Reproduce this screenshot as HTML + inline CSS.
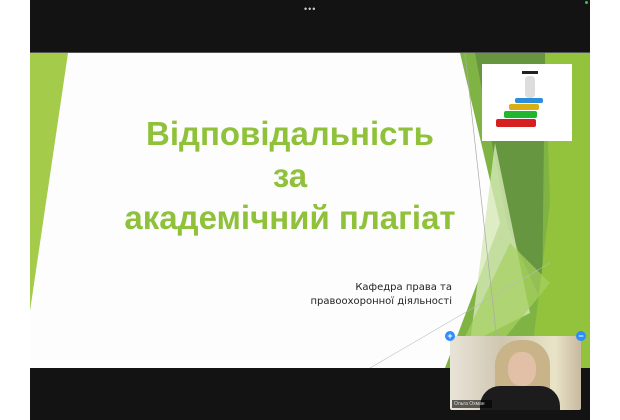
<!DOCTYPE html>
<html><head><meta charset="utf-8"><style>
html,body{margin:0;padding:0;width:620px;height:420px;background:#fff;overflow:hidden;font-family:"Liberation Sans",sans-serif;}
.blk{position:absolute;left:30px;top:0;width:560px;height:420px;background:#131313;}
.slide{position:absolute;left:30px;top:52px;width:560px;height:315px;background:#fdfdfd;overflow:hidden;border-top:1px solid #555;}
.t{position:absolute;left:0;width:520px;text-align:center;color:#8fc23a;font-weight:bold;font-size:33px;font-family:"Liberation Sans",sans-serif;letter-spacing:0px}
.s{position:absolute;right:138px;font-size:10px;color:#222;text-align:right;font-family:"DejaVu Sans",sans-serif}
.dots{position:absolute;left:304px;top:4px;color:#ccc;font-size:9px;letter-spacing:1px}
.vid{position:absolute;left:450px;top:336px;width:131px;height:74px;background:linear-gradient(90deg,#e8e4d8,#cfc6b0 40%,#e9e4c8 80%,#c8b8a0);border-radius:2px;overflow:hidden}
.btn{position:absolute;width:10px;height:10px;border-radius:50%;background:#2d8cff;color:#fff;font-size:9px;line-height:10px;text-align:center;font-weight:bold}
</style></head><body>
<div class="blk"></div>
<div class="dots">•••</div>
<div style="position:absolute;left:585px;top:1px;width:3px;height:3px;border-radius:50%;background:#3c3"></div>
<div class="slide">
<svg width="560" height="315" style="position:absolute;left:0;top:0">
<polygon points="0,0 38,0 0,258" fill="#a4cb4a"/>
<polygon points="430,0 560,0 560,315 415,315 470,170" fill="#7fb445"/>
<polygon points="445,0 515,0 512,250 478,175" fill="#66963f"/>
<polygon points="515,0 560,0 560,315 500,315 520,150" fill="#93c23d"/>
<polygon points="465,90 500,260 440,290" fill="#d6e8b6" opacity="0.8"/>
<polygon points="480,190 520,230 450,315 420,315" fill="#a6d060" opacity="0.7"/>
<line x1="435" y1="0" x2="470" y2="315" stroke="#aaa" stroke-width="0.7"/>
<line x1="340" y1="315" x2="520" y2="210" stroke="#bbb" stroke-width="0.6"/>
</svg>
<div style="position:absolute;left:452px;top:11px;width:90px;height:77px;background:#fff">
<div style="position:absolute;left:14px;top:55px;width:40px;height:8px;background:#d62020;border-radius:2px"></div>
<div style="position:absolute;left:22px;top:47px;width:33px;height:7px;background:#22b530;border-radius:2px"></div>
<div style="position:absolute;left:27px;top:40px;width:30px;height:6px;background:#d8b010;border-radius:2px"></div>
<div style="position:absolute;left:33px;top:34px;width:28px;height:5px;background:#2a8ed8;border-radius:2px"></div>
<div style="position:absolute;left:43px;top:12px;width:10px;height:22px;background:#ddd;border-radius:4px"></div>
<div style="position:absolute;left:40px;top:7px;width:16px;height:3px;background:#222"></div>
</div>
<div class="t" style="top:62px">Відповідальність</div>
<div class="t" style="top:104px">за</div>
<div class="t" style="top:146px">академічний плагіат</div>
<div class="s" style="top:229px">Кафедра права та</div>
<div class="s" style="top:243px">правоохоронної діяльності</div>
</div>
<div class="vid">
<div style="position:absolute;left:45px;top:4px;width:55px;height:72px;background:#c9b48a;border-radius:25px 25px 0 0"></div>
<div style="position:absolute;left:58px;top:16px;width:28px;height:34px;background:#e2c0a8;border-radius:45%"></div>
<div style="position:absolute;left:30px;top:50px;width:80px;height:30px;background:#1c1c1c;border-radius:20px 20px 0 0"></div>
<div style="position:absolute;left:2px;top:64px;width:38px;height:8px;background:rgba(0,0,0,.6);color:#ddd;font-size:5px;line-height:8px;padding-left:2px">Ольга Охман</div>
</div>
<div class="btn" style="left:445px;top:331px">+</div>
<div class="btn" style="left:576px;top:331px">−</div>
</body></html>
